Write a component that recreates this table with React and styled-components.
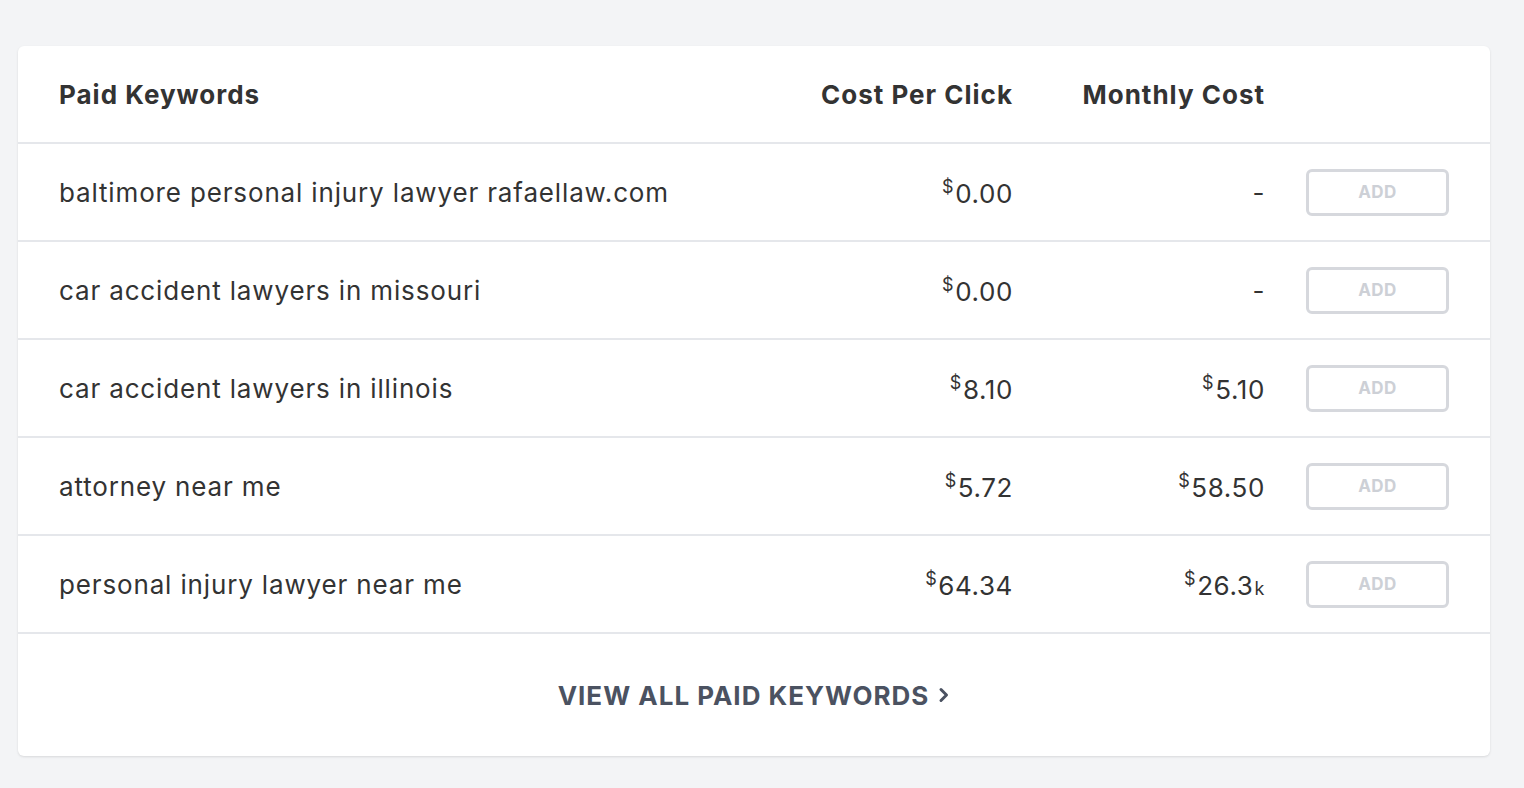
import React from 'react';
import styled, {createGlobalStyle} from 'styled-components';

const keywords = [
    {term: 'baltimore personal injury lawyer rafaellaw.com', cpc: '0.00', monthly: null},
    {term: 'car accident lawyers in missouri', cpc: '0.00', monthly: null},
    {term: 'car accident lawyers in illinois', cpc: '8.10', monthly: {value: '5.10'}},
    {term: 'attorney near me', cpc: '5.72', monthly: {value: '58.50'}},
    {term: 'personal injury lawyer near me', cpc: '64.34', monthly: {value: '26.3', unit: 'k'}}
];

export default function App() {
    return <Page>
        <GlobalStyle/>
        <Card>
            <HeadRow>
                <HeadCell>Paid Keywords</HeadCell>
                <HeadCell align="right">Cost Per Click</HeadCell>
                <HeadCell align="right">Monthly Cost</HeadCell>
                <span/>
            </HeadRow>
            {keywords.map(k => <Row key={k.term}>
                <Term>{k.term}</Term>
                <Money value={k.cpc}/>
                {k.monthly
                    ? <Money value={k.monthly.value} unit={k.monthly.unit}/>
                    : <Amount>-</Amount>}
                <Actions>
                    <AddButton disabled>ADD</AddButton>
                </Actions>
            </Row>)}
            <Footer>
                <ViewAll href="#">
                    VIEW ALL PAID KEYWORDS
                    <svg width="12" height="16" viewBox="0 0 12 16" fill="none">
                        <path d="M3 2.5 L8.5 8 L3 13.5" stroke="currentColor" strokeWidth="3" strokeLinecap="round" strokeLinejoin="round"/>
                    </svg>
                </ViewAll>
            </Footer>
        </Card>
    </Page>
}

// amount with a small raised dollar sign, and optional unit suffix
const Money = ({value, unit}) => <Amount>
    <Sup>$</Sup>{value}{unit && <Unit>{unit}</Unit>}
</Amount>

const GlobalStyle = createGlobalStyle`
    body {
        margin: 0;
        background: #f3f4f6;
        font-family: Inter, "Noto Sans", sans-serif;
        color: #333333;
    }
`;

const Page = styled.div`
    padding: 46px 34px 32px 18px;
`;

const Card = styled.div`
    background: #ffffff;
    border-radius: 6px;
    box-shadow: 0 1px 3px rgba(0, 0, 0, 0.08), 0 1px 2px rgba(0, 0, 0, 0.04);
`;

const Grid = styled.div`
    display: grid;
    grid-template-columns: 1fr 250px 252px 184px;
    align-items: center;
    padding: 0 41px;
    border-bottom: 2px solid #e5e7eb;
`;

const HeadRow = styled(Grid)`
    height: 96px;
`;

const HeadCell = styled.div`
    font-size: 26px;
    font-weight: 700;
    letter-spacing: 1px;
    color: #333333;
    text-align: ${p => p.align || 'left'};
`;

const Row = styled(Grid)`
    height: 96px;
`;

const Term = styled.div`
    font-size: 26px;
    letter-spacing: 0.85px;
    color: #333333;
`;

const Amount = styled.div`
    font-size: 26px;
    letter-spacing: 0.6px;
    color: #333333;
    text-align: right;
`;

const Sup = styled.span`
    font-size: 18px;
    vertical-align: 10px;
    margin-right: 1px;
`;

const Unit = styled.span`
    font-size: 18px;
    margin-left: 1px;
`;

const Actions = styled.div`
    display: flex;
    justify-content: flex-end;
`;

const AddButton = styled.button`
    width: 143px;
    height: 47px;
    border: 3px solid #d6d8dd;
    border-radius: 6px;
    background: #ffffff;
    color: #cdd0d6;
    font-family: Inter, "Noto Sans", sans-serif;
    font-size: 17px;
    font-weight: 700;
    letter-spacing: 0.5px;
    padding: 0;
`;

const Footer = styled.div`
    height: 122px;
    display: flex;
    align-items: center;
    justify-content: center;
`;

const ViewAll = styled.a`
    display: flex;
    align-items: center;
    gap: 9px;
    font-size: 26px;
    font-weight: 700;
    color: #4b5261;
    text-decoration: none;
    letter-spacing: 1px;
`;
